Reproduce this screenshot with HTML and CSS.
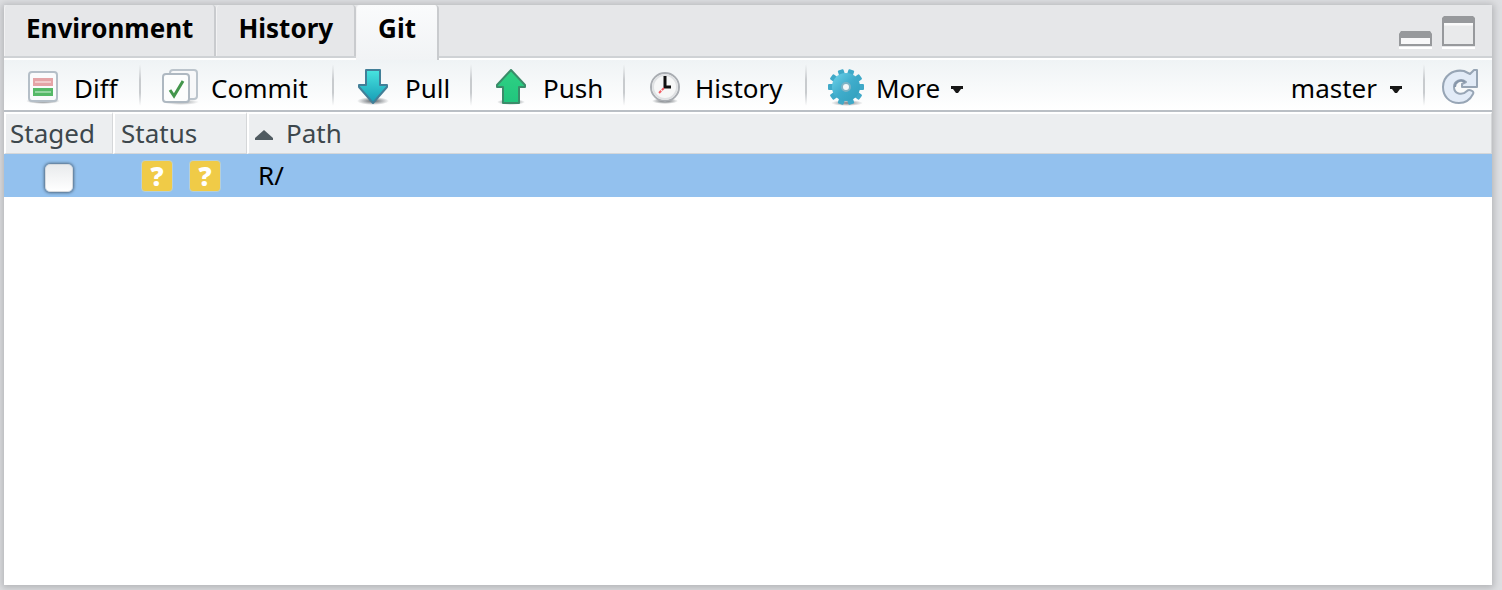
FILE: index.html
```html
<!DOCTYPE html>
<html lang="en">
<head>
<meta charset="utf-8">
<title>Git</title>
<link rel="stylesheet" href="styles.css">
</head>
<body>
<main class="pane">
  <header class="tabbar">
    <div class="tabs" role="tablist">
      <button class="tab" role="tab" aria-selected="false">Environment</button>
      <button class="tab" role="tab" aria-selected="false">History</button>
      <button class="tab active" role="tab" aria-selected="true">Git</button>
    </div>
    <div class="window-tools">
      <button class="icon-button" aria-label="Minimize">
        <svg width="34" height="34" viewBox="0 0 34 34"><path d="M1 32h33" stroke="#fff" stroke-width="2"/><path d="M2 29V19l2-3h27l2 3v10z" fill="#f8f8f9" stroke="#97999c" stroke-width="2"/><path d="M1 22v-4l2-3h29l2 3v4z" fill="#97999c"/></svg>
      </button>
      <button class="icon-button" aria-label="Maximize">
        <svg width="34" height="34" viewBox="0 0 34 34"><path d="M1 32h33" stroke="#fff" stroke-width="2"/><path d="M2 29V4l2-2h27l2 2v25z" fill="#e9eaeb" stroke="#97999c" stroke-width="2"/><path d="M3 8h29" stroke="#fafafa" stroke-width="3"/><path d="M1 7V2l2-2h29l2 2v5z" fill="#97999c"/></svg>
      </button>
    </div>
  </header>

  <div class="toolbar" role="toolbar" aria-label="Git">
    <button class="tool diff">
      <svg width="34" height="34" viewBox="0 0 34 34">
        <defs><radialGradient id="shade"><stop stop-color="#3c434a" stop-opacity=".85"/><stop offset="1" stop-color="#3c434a" stop-opacity="0"/></radialGradient></defs>
        <ellipse cx="17" cy="31" rx="17" ry="3" fill="url(#shade)"/>
        <rect x="3" y="2" width="28" height="29" rx="3" fill="#fafbfc" stroke="#b5bfc8" stroke-width="2"/>
        <rect x="7" y="8" width="20" height="8" fill="#e5a4a7"/><path d="M9 12h16" stroke="#f2cccd" stroke-width="2"/>
        <rect x="7" y="18" width="20" height="8" fill="#55b967"/><path d="M9 22h16" stroke="#94d6a0" stroke-width="2"/>
      </svg>
      <span>Diff</span>
    </button>
    <button class="tool commit">
      <svg width="38" height="36" viewBox="0 0 38 36">
        <ellipse cx="20" cy="33" rx="18" ry="3" fill="url(#shade)" opacity=".6"/>
        <rect x="9" y="1" width="27" height="29" rx="3" fill="#f7f8f9" stroke="#bbc4cc" stroke-width="2"/>
        <rect x="2" y="5" width="26" height="28" rx="3" fill="#fcfdfd" stroke="#aeb8c1" stroke-width="2"/>
        <path d="m9 21 4 6 9-15" fill="none" stroke="#43964c" stroke-width="3"/>
      </svg>
      <span>Commit</span>
    </button>
    <button class="tool pull">
      <svg width="32" height="36" viewBox="0 0 32 36">
        <defs><linearGradient id="down" x2="0" y2="1"><stop stop-color="#48e4df"/><stop offset="1" stop-color="#169bb5"/></linearGradient></defs>
        <ellipse cx="16" cy="32" rx="16" ry="4" fill="url(#shade)"/>
        <path d="M9 1h14v15h7v2L16 34 2 18v-2h7z" fill="url(#down)" stroke="#427f98" stroke-width="2" stroke-linejoin="round"/>
      </svg>
      <span>Pull</span>
    </button>
    <button class="tool push">
      <svg width="32" height="36" viewBox="0 0 32 36">
        <defs><linearGradient id="up" x2="0" y2="1"><stop stop-color="#30d184"/><stop offset="1" stop-color="#20c57d"/></linearGradient></defs>
        <ellipse cx="16" cy="33" rx="14" ry="3" fill="url(#shade)"/>
        <path d="m16 1 14 15v2h-6v16H8V18H2v-2z" fill="url(#up)" stroke="#3b8c6a" stroke-width="2" stroke-linejoin="round"/>
      </svg>
      <span>Push</span>
    </button>
    <button class="tool log">
      <svg width="34" height="34" viewBox="0 0 34 34">
        <ellipse cx="17" cy="31" rx="13" ry="3" fill="url(#shade)"/>
        <circle cx="17" cy="17" r="14" fill="#f6f7f7" stroke="#a9adb2" stroke-width="2"/>
        <circle cx="17" cy="17" r="12" fill="none" stroke="#dfe1e3" stroke-width="2"/>
        <path d="M17 6v11h6" fill="none" stroke="#111" stroke-width="3"/><path d="m16 18-5 5" stroke="#f35c63" stroke-width="2" stroke-dasharray="3 1"/>
      </svg>
      <span>History</span>
    </button>
    <button class="tool more">
      <svg width="38" height="38" viewBox="0 0 38 38">
        <defs><linearGradient id="gear" gradientUnits="userSpaceOnUse" x1="4" y1="4" x2="34" y2="34"><stop stop-color="#70d6ed"/><stop offset=".5" stop-color="#3faccb"/><stop offset="1" stop-color="#2f9dbb"/></linearGradient></defs>
        <ellipse cx="20" cy="35" rx="16" ry="3" fill="url(#shade)" opacity=".8"/>
        <g fill="#3fa9c8">
          <rect id="tooth" x="16" y="1" width="6" height="36" rx="1" transform="rotate(18 19 19)"/>
          <rect x="16" y="1" width="6" height="36" rx="1" transform="rotate(54 19 19)"/>
          <rect x="16" y="1" width="6" height="36" rx="1" transform="rotate(90 19 19)"/>
          <rect x="16" y="1" width="6" height="36" rx="1" transform="rotate(126 19 19)"/>
          <rect x="16" y="1" width="6" height="36" rx="1" transform="rotate(162 19 19)"/>
        </g>
        <circle cx="19" cy="19" r="14" fill="url(#gear)"/>
        <circle cx="19" cy="19" r="4" fill="#f3f7f8" stroke="#7db3c5" stroke-width="2"/>
      </svg>
      <span>More</span>
      <svg class="caret" width="12" height="8" viewBox="0 0 12 8"><path d="M0 0h12v3H10L7 7H5L2 3H0z" fill="#171717"/></svg>
    </button>
    <button class="tool branch">
      <span>master</span>
      <svg class="caret" width="12" height="8" viewBox="0 0 12 8"><path d="M0 0h12v3H10L7 7H5L2 3H0z" fill="#171717"/></svg>
    </button>
    <button class="tool refresh" aria-label="Refresh">
      <svg width="38" height="38" viewBox="0 0 38 38">
        <path d="M36 2v17H21v-3l4-2c-5-4-12-1-12 5 0 7 8 9 13 4 2-2 8 0 6 3-3 6-8 9-14 9C8 35 2 28 2 19 2 8 12 1 23 3l6 3 4-4z" fill="#e2ebf7" stroke="#97a5b5" stroke-width="2" stroke-linejoin="round"/>
        <path d="M24 14c-5-3-10 0-10 5" fill="none" stroke="#8696aa" stroke-width="2"/>
      </svg>
    </button>
  </div>

  <table class="changes">
    <thead>
      <tr><th class="staged">Staged</th><th class="status">Status</th><th><svg class="sort" width="18" height="10" viewBox="0 0 18 10"><path d="M0 10V8l9-8 9 8v2z" fill="#505b61"/></svg>Path</th></tr>
    </thead>
    <tbody>
      <tr>
        <td class="check"><input type="checkbox" aria-label="Stage R/"></td>
        <td><div class="marks"><span class="badge">?</span><span class="badge">?</span></div></td>
        <td class="path">R/</td>
      </tr>
    </tbody>
  </table>
</main>
</body>
</html>
```
FILE: styles.css
```css
* { box-sizing: border-box; }
body {
  margin: 0;
  padding: 5px 10px 5px 4px;
  height: 100vh;
  background: #dedfe2;
  font-family: "Noto Sans", "Open Sans", sans-serif;
  font-size: 26px;
  color: #000;
}
button {
  margin: 0;
  padding: 0;
  border: 0;
  background: none;
  font: inherit;
  color: inherit;
}
svg { display: block; flex: none; }
.pane {
  height: 100%;
  display: flex;
  flex-direction: column;
  background: #fff;
  box-shadow: 0 1px 7px 2px #b4b5b8;
}
.tabbar {
  display: flex;
  justify-content: space-between;
  height: 55px;
  background: #e6e7e9;
  box-shadow: inset 0 -2px #fff, inset 0 -4px #cfd2d5;
}
.tabs { display: flex; }
.tab {
  height: 51px;
  padding: 0 21px 5px;
  border-left: 1px solid #f2f2f3;
  border-right: 2px solid #c9cbce;
  border-radius: 4px 4px 0 0;
  font-weight: 700;
  line-height: 36px;
}
.tab.active {
  height: 55px;
  padding-bottom: 9px;
  background: linear-gradient(#fafbfc, #f1f3f5);
}
.window-tools {
  display: flex;
  align-items: flex-start;
  gap: 9px;
  padding: 11px 17px 0 0;
}
.toolbar {
  display: flex;
  height: 52px;
  background: linear-gradient(#eff3f5, #fff);
  border-bottom: 2px solid #babfc5;
}
.tool {
  display: flex;
  align-items: center;
  border-right: 2px solid;
  border-image: linear-gradient(transparent 10%, #c8cbce 40%, #c8cbce 65%, transparent 90%) 1;
}
.tool svg { margin-top: 3px; }
.tool span { padding-top: 6px; }
.diff { width: 137px; padding-left: 22px; gap: 14px; }
.commit { width: 193px; padding-left: 20px; gap: 12px; }
.pull { width: 138px; padding-left: 23px; gap: 16px; }
.push { width: 153px; padding-left: 23px; gap: 16px; }
.log { width: 182px; padding-left: 23px; gap: 13px; }
.more { padding-left: 20px; gap: 11px; border: 0; }
.branch { margin-left: auto; padding-right: 21px; gap: 13px; }
.tool .caret { margin-top: 9px; }
.refresh { padding: 0 13px 0 16px; border: 0; }
.changes {
  width: 100%;
  table-layout: fixed;
  border-collapse: separate;
  border-spacing: 0;
}
th {
  height: 42px;
  padding: 0 6px 2px;
  border-top: 2px solid #fff;
  border-left: 2px solid #fff;
  border-right: 1px solid #d5d7d9;
  border-bottom: 1px solid #d5d7d9;
  background: #eceef0;
  color: #3d474c;
  font-weight: 400;
  line-height: 36px;
  text-align: left;
}
.staged { width: 109px; padding-left: 4px; }
.status { width: 134px; }
.sort { display: inline-block; margin-right: 13px; vertical-align: 3px; }
td { height: 43px; padding: 0 11px 2px; background: #93c1ee; line-height: 36px; }
.check input {
  appearance: none;
  display: block;
  width: 28px;
  height: 28px;
  margin: 6px auto 0;
  border: 1px solid #d5d9dd;
  border-radius: 5px;
  background: linear-gradient(#e9ebed, #fff);
  box-shadow: 0 0 3px 1px #526b83;
}
.marks { display: flex; gap: 16px; padding: 3px 0 0 17px; }
.badge {
  width: 32px;
  height: 32px;
  border: 1px solid #b5cfda;
  border-radius: 4px;
  background: #f0cb47;
  color: #fff;
  font-size: 26px;
  font-weight: 900;
  line-height: 30px;
  text-align: center;
}
```
